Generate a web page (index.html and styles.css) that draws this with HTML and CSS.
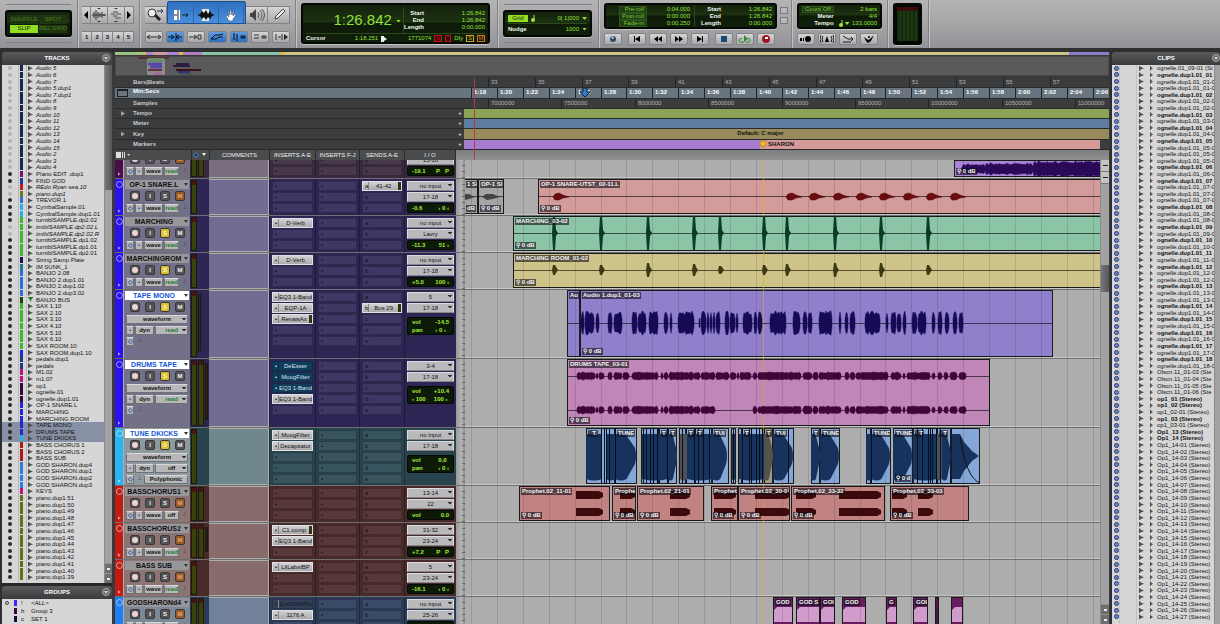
FILE: index.html
```html
<!DOCTYPE html>
<html lang="en">
<head>
  <meta charset="UTF-8" />
  <meta name="viewport" content="width=device-width, initial-scale=1.0"/>
  <title>Edit: Session</title>
  <link rel="stylesheet" href="styles.css">
</head>
<body>
  <!-- Toolbar -->
  <header class="toolbar">
    <section class="module modes">
      <div class="lcd mode-lcd">
        <button>SHUFFLE</button><button>SPOT</button>
        <button class="on">SLIP</button><button>REL GRID</button>
      </div>
    </section>

    <section class="module zooms">
      <div class="row big">
        <button class="slim" aria-label="Zoom out"><svg width="4" height="8" viewBox="0 0 4 8"><path d="M4 0v8L0 4z"/></svg></button>
        <button aria-label="Audio zoom"><svg width="14" height="14" viewBox="0 0 14 14"><path d="M0 7h14M2 4v6M4 2v10M6 4v6M8 5v4M10 4v6M12 6v2" stroke="#333" fill="none"/><path d="M5 1l2-1 2 1zM5 13l2 1 2-1z"/></svg></button>
        <button aria-label="MIDI zoom"><svg width="14" height="14" viewBox="0 0 14 14"><path d="M4 4h5M2 6h4M7 6h5M4 8h4M6 10h6" stroke="#777" stroke-width="1.5" fill="none"/><path d="M5 1l2-1 2 1zM5 13l2 1 2-1z"/></svg></button>
        <button class="slim" aria-label="Zoom in"><svg width="4" height="8" viewBox="0 0 4 8"><path d="M0 0v8l4-4z"/></svg></button>
      </div>
      <div class="row small">
        <button>1</button><button>2</button><button>3</button><button>4</button><button>5</button>
      </div>
    </section>

    <section class="module tools">
      <div class="row big">
        <button aria-label="Zoomer"><svg width="18" height="15" viewBox="0 0 18 15"><circle cx="5" cy="5" r="4" fill="#eee" stroke="#333"/><path d="M8 7l5 5" stroke="#222" stroke-width="3"/><path d="M10 3h6M14 1l2 2-2 2" stroke="#333" fill="none"/></svg></button>
        <div class="smart">
          <button aria-label="Trim"><svg width="16" height="14" viewBox="0 0 16 14"><path d="M1 2h6v10H1z" fill="#fff"/><path d="M1 7h3M5 2v10" stroke="#222"/><path d="M9 7h6M13 5l2 2-2 2" stroke="#123" fill="none"/></svg></button>
          <button aria-label="Selector"><svg width="18" height="14" viewBox="0 0 18 14"><path d="M5 1h7v12H5z" fill="#e8e8e8"/><path d="M0 7l3-1 2-3 2 2 2-3 2 4 2-3 2 3 3 1-3 1-2 3-2-2-2 3-2-3-2 2-2-3z" fill="#111"/></svg></button>
          <button aria-label="Grabber"><svg width="14" height="14" viewBox="0 0 14 14"><path d="M5 13L2 8l1-1 2 2-1-6h1l1 4V2h1l1 5 1-4h1l-1 5 2-2 1 1-3 4v2z" fill="#fff" stroke="#345" stroke-width=".5"/></svg></button>
        </div>
        <button aria-label="Scrubber"><svg width="16" height="14" viewBox="0 0 16 14"><path d="M1 5h2l4-4v12L3 9H1z" fill="#444"/><path d="M9 4q2 3 0 6M11 2q4 5 0 10M13 1q5 6 0 12" stroke="#555" fill="none"/></svg></button>
        <button aria-label="Pencil"><svg width="14" height="14" viewBox="0 0 14 14"><path d="M3 11l1-3 7-7 2 2-7 7z" fill="#eee" stroke="#444"/></svg></button>
      </div>
      <div class="row small">
        <button aria-label="Zoom toggle"><svg width="14" height="6"><path d="M0 3h14M3 1L0 3l3 2M11 1l3 2-3 2" stroke="#333" fill="none"/></svg></button>
        <button class="blue" aria-label="Tab to transients"><svg width="14" height="8"><path d="M0 4h6M3 2l3 2-3 2M8 0v8M8 4h6M11 2L8 4l3 2" stroke="#012" fill="none"/></svg></button>
        <button aria-label="Mirrored MIDI"><svg width="14" height="8"><path d="M0 4h7M5 2l3 2-3 2M9 2h3v4H9z" stroke="#333" fill="none"/></svg></button>
        <button class="blue" aria-label="Automation follows edit"><svg width="14" height="8"><path d="M1 6l4-4h4l4-1M1 6h5l3-2h4" stroke="#012" fill="none"/></svg></button>
        <button class="blue" aria-label="Link timeline"><svg width="14" height="8"><path d="M2 0v7M5 1v7M8 4h6M10 2v4M12 2v4" stroke="#012" fill="none"/></svg></button>
        <button aria-label="Link track"><svg width="14" height="8"><path d="M1 2h5M1 5h5M8 4h6M10 2v4M12 2v4" stroke="#333" fill="none"/></svg></button>
        <button aria-label="Insertion follows"><svg width="14" height="8"><path d="M2 1v6M4 4h3M8 1v6" stroke="#333"/><path d="M10 1v6l4-3z" fill="#222"/></svg></button>
      </div>
    </section>

    <section class="module counter">
      <div class="lcd main-lcd">
        <div class="main-top">
          <button class="big-time">1:26.842 <span class="caret"></span></button>
          <dl class="pairs">
            <dt>Start</dt><dd>1:26.842</dd>
            <dt>End</dt><dd>1:26.842</dd>
            <dt>Length</dt><dd>0:00.000</dd>
          </dl>
        </div>
        <div class="main-bottom">
          <b>Cursor</b><span class="push">1:18.251</span>
          <svg width="6" height="6"><path d="M0 0h3v1l3 2-3 2v1H0z" fill="#eee"/></svg>
          <span class="push">1771074</span>
          <i class="chip red">x</i><i class="chip red slant"></i><span>Dly</span><i class="chip gold">S</i><i class="chip orange">M</i>
        </div>
      </div>
    </section>

    <section class="module gridval">
      <div class="lcd grid-lcd">
        <div class="line"><button class="on">Grid</button><svg width="4" height="7"><path d="M3 0v5" stroke="#9ee23c"/><circle cx="2" cy="5" r="2" fill="#9ee23c"/></svg><span class="push">0| 1|000</span><span class="caret"></span></div>
        <div class="line"><b>Nudge</b><span class="push">1000</span><span class="caret"></span></div>
      </div>
    </section>

    <section class="module transport">
      <div class="stack">
        <div class="lcd trans-lcd">
          <dl class="pairs rolls"><dt>Pre-roll</dt><dd>0:04.000</dd><dt>Post-roll</dt><dd>0:00.000</dd><dt>Fade-in</dt><dd>0:00.250</dd></dl>
          <dl class="pairs"><dt>Start</dt><dd>1:26.842</dd><dt>End</dt><dd>1:26.842</dd><dt>Length</dt><dd>0:00.000</dd></dl>
        </div>
        <div class="row keys">
          <button class="apart" aria-label="Online"><svg width="8" height="8"><circle cx="4" cy="4" r="3" fill="#2a4a66"/><path d="M4 4L2 2M4 4V1" stroke="#cde"/></svg></button>
          <button aria-label="Return to zero"><svg width="6" height="6"><path d="M0 0h1v6H0zM6 0v6L1 3z"/></svg></button>
          <button aria-label="Rewind"><svg width="8" height="6"><path d="M4 0v6L0 3zM8 0v6L4 3z"/></svg></button>
          <button aria-label="Fast forward"><svg width="8" height="6"><path d="M0 0v6l4-3zM4 0v6l4-3z"/></svg></button>
          <button class="apart" aria-label="Go to end"><svg width="6" height="6"><path d="M5 0h1v6H5zM0 0v6l5-3z"/></svg></button>
          <button aria-label="Stop"><svg width="6" height="6"><path d="M0 0h6v6H0z" fill="#174a78"/></svg></button>
          <button aria-label="Play"><svg width="14" height="9"><path d="M4 3Q0 4 1 6q2 2 5 1M10 3q3 1 2 3-2 2-4 1" stroke="#2e8a2e" fill="none"/><path d="M6 0v7l4-3z" fill="#2e8a2e"/></svg></button>
          <button aria-label="Record"><svg width="8" height="8"><circle cx="4" cy="4" r="4" fill="#a3131d"/><path d="M3 2h3v2H3z" fill="#fff"/></svg></button>
        </div>
      </div>
      <div class="squares"><button aria-label="Pre"></button><button aria-label="Post"></button></div>
    </section>

    <section class="module midi">
      <div class="stack">
        <div class="lcd midi-lcd">
          <dl class="pairs"><dt class="boxed">Count Off</dt><dd>2 bars</dd><dt>Meter</dt><dd>4/4</dd><dt>Tempo</dt><dd class="tempo-val"><svg width="4" height="7"><path d="M3 0v5" stroke="#9ee23c"/><circle cx="2" cy="5" r="2" fill="#9ee23c"/></svg><span class="caret"></span><span class="push">133.0000</span></dd></dl>
        </div>
        <div class="row keys">
          <button aria-label="Wait for note"><svg width="12" height="8"><path d="M0 3h2v3H0zM3 3h1v3H3z"/><circle cx="8" cy="4" r="3"/></svg></button>
          <button aria-label="Metronome"><svg width="14" height="8"><path d="M5 7l2-6 2 6z"/><path d="M3 1Q1 4 3 7M1 0Q-1 4 1 8M11 1q2 3 0 6M13 0q2 4 0 8" stroke="#222" fill="none"/></svg></button>
          <button aria-label="MIDI merge"><svg width="12" height="8"><path d="M1 1l5 3M1 7h8M6 4h5M9 2l2 2-2 2" stroke="#222" fill="none"/></svg></button>
          <button aria-label="Conductor"><svg width="12" height="8"><path d="M1 2l4 3 2-1 4-4-3 6-3 2-2-2z"/><circle cx="6" cy="2" r="1"/></svg></button>
        </div>
      </div>
    </section>

    <section class="module out"><div class="lcd out-meter"></div></section>
  </header>

  <main class="workspace">
    <!-- Left sidebar -->
    <aside class="side left">
      <h2>TRACKS<button class="knob" aria-label="Tracks menu"></button></h2>
      <div class="list-wrap">
        <ul class="track-list" id="trackList"></ul>
        <div class="vbar"><i class="thumb"></i><i class="arrow up"></i><i class="arrow"></i></div>
      </div>
      <h2>GROUPS<button class="knob" aria-label="Groups menu"></button></h2>
      <ul class="group-list">
        <li><i class="ring"></i><i class="chipbar" style="background:#4424ee"></i><span>!</span><em>&lt;ALL&gt;</em></li>
        <li><i></i><i class="chipbar" style="background:#310b33"></i><span>h</span>Group 3</li>
        <li><i></i><i class="chipbar" style="background:#1b0c3c"></i><span>c</span>SET 1</li>
      </ul>
    </aside>

    <!-- Edit area -->
    <section class="edit">
      <div class="memory"></div>
      <svg class="universe" height="20">
        <rect x="31" y="0" width="18" height="20" fill="#8b8b8b"/>
        <path d="M22 1h31" stroke="#5c2c34" stroke-width="2"/>
        <path d="M32 3h16" stroke="#6b8d6a" stroke-width="4"/>
        <path d="M32 7h14M34 10h12" stroke="#5a4aa8" stroke-width="3"/>
        <path d="M32 13h14" stroke="#6c2e44" stroke-width="2"/>
        <path d="M38 17h8" stroke="#b05ca8" stroke-width="2"/>
        <path d="M57 9h17M60 7h13" stroke="#2c1c3e" stroke-width="2"/>
        <path d="M60 13h25" stroke="#3c1416" stroke-width="2"/>
        <path d="M62 15h12" stroke="#3a2b7a" stroke-width="2"/>
        <path d="M64 17h12" stroke="#285a52"/>
      </svg>

      <div class="rulers">
        <div class="ruler"><span class="rname">Bars|Beats</span><div class="scale" id="bars"></div></div>
        <div class="ruler active"><span class="rname">Min:Secs</span><div class="scale" id="mins"></div></div>
        <div class="ruler"><span class="rname">Samples</span><div class="scale" id="samples"></div></div>
        <div class="ruler"><span class="rname tri">Tempo</span><button>+</button><div class="scale tempo"></div></div>
        <div class="ruler"><span class="rname">Meter</span><button>+</button><div class="scale meter"></div></div>
        <div class="ruler"><span class="rname tri">Key</span><button>+</button><div class="scale key"><b>Default: C major</b></div></div>
        <div class="ruler"><span class="rname">Markers</span><button>+</button><div class="scale markers"><div class="part-a"></div><div class="part-b"><svg width="6" height="8"><path d="M0 1h6v4L3 7 0 5z" fill="#f5b81f" stroke="#7a5a10" stroke-width=".5"/></svg><b>SHARON</b></div></div></div>
        <i class="redline"></i>
        <svg class="playmark" width="12" height="10"><path d="M4 0h4v4h3L6 9 1 4h3z" fill="#2f7fd6" stroke="#123"/></svg>
      </div>

      <div class="heads">
        <span class="h-track"><svg width="14" height="6"><path d="M0 0h5v6H0zM6 0h1v6H6zM8 0h1v6H8z" fill="#ddd"/><path d="M11 2h3l-1 2z" fill="#ddd"/></svg></span>
        <span class="h-meter"><svg width="14" height="6"><circle cx="3" cy="3" r="2" fill="#1d2f4c" stroke="#4a86c8"/><path d="M9 1h4l-2 3z" fill="#eee"/></svg></span>
        <span class="h-com">COMMENTS</span><span class="h-ins">INSERTS A-E</span><span class="h-ins2">INSERTS F-J</span><span class="h-snd">SENDS A-E</span><span class="h-io">I / O</span>
        <div class="h-time"></div>
      </div>

      <div class="arrange">
        <div class="tracks" id="tracks">
          <div class="grid-lines" id="gridLines"></div>
        </div>
        <div class="vbar"><i class="tool"></i><i class="tool"></i><i class="thumb"></i><i class="arrow up"></i><i class="arrow"></i></div>
      </div>
    </section>

    <!-- Clip list -->
    <aside class="side right">
      <h2>CLIPS<button class="knob" aria-label="Clips menu"></button></h2>
      <div class="list-wrap">
        <ul class="clip-list" id="clipList"></ul>
        <div class="vbar"></div>
      </div>
    </aside>
  </main>
  <script src="script.js"></script>
</body>
</html>
```

FILE: styles.css
```css
* {
  box-sizing: border-box;
}

body {
  margin: 0;
  height: 100vh;
  display: flex;
  flex-direction: column;
  overflow: hidden;
  background: #2c2e31;
  font: 6px/7px "Liberation Sans", Arial, sans-serif;
  color: #111;
}

button, select {
  font: inherit;
  color: inherit;
  border: 0;
  margin: 0;
  padding: 0;
  background: none;
  appearance: none;
}

ul, dl, dd, h2 {
  margin: 0;
  padding: 0;
  list-style: none;
}

i {
  font-style: normal;
}

svg {
  display: block;
  flex: none;
}

.push {
  margin-left: auto;
}

.caret {
  display: inline-block;
  width: 5px;
  height: 3px;
  background: currentColor;
  clip-path: polygon(0 0, 100% 0, 50% 100%);
}

/* Toolbar */
.toolbar {
  flex: 0 0 48px;
  display: flex;
  background: linear-gradient(#b4b4b7, #a2a2a5 60%, #919295);
}

.module {
  flex: none;
  padding: 6px 5px 0;
  border-right: 1px solid #818284;
  box-shadow: 1px 0 0 #c2c2c4;
  display: flex;
  flex-direction: column;
  gap: 7px;
}

.modes, .gridval {
  background: linear-gradient(transparent 4px, #808184 4px 5px, transparent 5px 42px, #808184 42px 43px, transparent 43px) center / calc(100% - 12px) 100% no-repeat;
}

.modes {
  width: 78px;
  padding-top: 10px;
}

.zooms {
  width: 62px;
  padding-left: 4px;
}

.tools {
  width: 156px;
}

.counter {
  width: 202px;
  padding-top: 3px;
}

.gridval {
  width: 101px;
  padding-top: 10px;
}

.transport {
  width: 193px;
  padding-top: 3px;
  flex-direction: row;
  gap: 3px;
}

.midi {
  width: 96px;
  padding-top: 3px;
}

.out {
  width: 41px;
  padding-top: 3px;
}

.lcd {
  background: linear-gradient(#14210c, #1d3312 45%, #0d1a08 50%, #101f0b);
  border: 2px solid #050805;
  border-radius: 3px;
  box-shadow: 0 1px 0 #c4c4c6;
  color: #93e03a;
}

.lcd b, .lcd dt {
  color: #f2f5ee;
  font-weight: bold;
}

.mode-lcd {
  height: 27px;
  width: 67px;
  padding: 3px 3px 2px;
  display: grid;
  grid-template-columns: 1fr 1fr;
  grid-auto-rows: 1fr;
  gap: 1px;
}

.mode-lcd button {
  background: #1d3510;
  color: #4e7f22;
  white-space: nowrap;
}

.mode-lcd .on, .grid-lcd .on {
  background: #93dd22;
  color: #14240a;
}

.row {
  display: flex;
}

.row button {
  display: flex;
  align-items: center;
  justify-content: center;
}

.row.big {
  height: 18px;
}

.row.big > button, .row.small button, .keys button {
  background: linear-gradient(#d6d6d8, #a9a9ab);
  border: 1px solid #828385;
  border-left-width: 0;
}

.zooms .big button {
  flex: 1;
}

.zooms .big .slim {
  flex: 0 0 9px;
}

.row.small {
  height: 12px;
}

.zooms .small button {
  flex: 1;
  font-weight: bold;
}

.tools .big > button {
  flex: 1;
}

.smart {
  display: flex;
  height: 23px;
  margin-top: -5px;
  padding: 4px 1px 0;
  background: linear-gradient(#2e6fc0, #4b8fdc);
  border: 1px solid #1d4f92;
  border-radius: 2px 2px 0 0;
}

.smart button {
  width: 25px;
  border-right: 1px solid #2b65ad;
}

.tools .small, .keys {
  gap: 3px;
}

.tools .small button {
  flex: 1;
  border-left-width: 1px;
  border-radius: 2px;
}

.tools .small .blue {
  background: linear-gradient(#5f9de2, #2e6fbe);
}

.main-lcd {
  height: 41px;
  width: 189px;
  padding: 2px 3px;
}

.main-top {
  display: flex;
  height: 27px;
  border-bottom: 1px solid #2c4a1c;
}

.big-time {
  flex: 1;
  font-size: 15px;
  line-height: 24px;
  text-align: right;
  padding-right: 2px;
  border-right: 1px solid #2c4a1c;
}

.big-time .caret {
  vertical-align: middle;
}

.pairs {
  display: grid;
  grid-template-columns: auto 1fr;
  column-gap: 3px;
  align-content: center;
  line-height: 7px;
}

.pairs dt, .pairs dd {
  text-align: right;
}

.main-top .pairs {
  width: 81px;
}

.main-bottom {
  display: flex;
  align-items: center;
  gap: 3px;
  height: 9px;
}

.main-bottom b {
  width: 28px;
}

.chip {
  width: 8px;
  height: 7px;
  border: 1px solid currentColor;
  text-align: center;
  line-height: 5px;
}

.chip.red {
  color: #c31616;
  background: #4a0b0b;
}

.chip.slant {
  width: 6px;
}

.chip.gold {
  color: #c7a52a;
}

.chip.orange {
  color: #da7420;
}

.grid-lcd {
  height: 27px;
  width: 89px;
  padding: 2px 3px;
}

.line {
  display: flex;
  align-items: center;
  gap: 3px;
  height: 10px;
}

.line:first-child {
  border-bottom: 1px solid #2c4a1c;
}

.grid-lcd .on {
  width: 20px;
}

.stack {
  display: flex;
  flex-direction: column;
  gap: 4px;
}

.trans-lcd {
  width: 173px;
  height: 26px;
  display: flex;
  padding: 0 3px;
}

.trans-lcd .pairs {
  flex: 1;
  padding-left: 6px;
}

.trans-lcd .rolls {
  padding: 0 4px 0 10px;
  margin: 0;
  border-right: 1px solid #2c4a1c;
}

.rolls dt, .pairs .boxed {
  color: #7fc432;
  font-weight: normal;
  background: #1f3d14;
  box-shadow: inset 0 0 0 1px #2d551b;
  padding: 0 3px;
}

.tempo-val {
  display: flex;
  align-items: center;
  gap: 2px;
  padding-left: 2px;
}

.keys button {
  width: 18px;
  height: 12px;
  border-left-width: 1px;
  border-radius: 2px;
}

.keys .apart {
  margin-right: 3px;
}

.squares {
  display: flex;
  flex-direction: column;
  gap: 3px;
  padding-top: 4px;
}

.squares button {
  width: 8px;
  height: 7px;
  background: #b9b9bb;
  border: 1px solid #77787a;
}

.midi-lcd {
  width: 85px;
  height: 26px;
  padding: 1px 3px;
}

.out-meter {
  width: 29px;
  height: 42px;
  background: linear-gradient(#3a0d0b 0 4px, transparent 4px), repeating-linear-gradient(90deg, #132b0c 0 2px, #1c3a12 2px 4px);
  border-width: 4px;
}

/* Workspace */
.workspace {
  flex: 1;
  min-height: 0;
  display: flex;
  padding-top: 4px;
  background: #2e2f31;
}

.side {
  display: flex;
  flex-direction: column;
  min-height: 0;
  min-width: 0;
  background: #262729;
}

.left {
  flex: 0 0 110px;
  margin-left: 2px;
}

.right {
  flex: 0 0 108px;
  margin-left: 2px;
}

.side h2 {
  flex: none;
  position: relative;
  height: 13px;
  font-size: 6px;
  line-height: 13px;
  text-align: center;
  color: #fff;
  background: linear-gradient(#5b5b5d, #3a3b3d);
  border-radius: 3px 3px 0 0;
}

.knob {
  position: absolute;
  right: 2px;
  top: 2px;
  width: 8px;
  height: 8px;
  border-radius: 50%;
  border: 1px solid #a9a9a9;
  background: #666;
}

.knob::after {
  content: "";
  position: absolute;
  left: 1px;
  top: 2px;
  width: 4px;
  height: 3px;
  background: #d0d0d0;
  clip-path: polygon(0 0, 100% 0, 50% 100%);
}

.right .knob {
  right: 0;
}

.list-wrap {
  flex: 1;
  min-height: 0;
  min-width: 0;
  display: flex;
}

.track-list, .clip-list {
  flex: 1;
  min-width: 0;
  display: flex;
  flex-direction: column;
  padding-bottom: 2px;
  white-space: nowrap;
  overflow: hidden;
}

.track-list {
  background: linear-gradient(90deg, #d6d6d6 16px, #b9b9b9 16px 17px, #d6d6d6 17px 24px, #b9b9b9 24px 25px, #d6d6d6 25px);
}

.track-list li, .clip-list li {
  flex: 1 1 0;
  min-height: 0;
  display: flex;
  align-items: center;
  line-height: 6px;
}

.dot {
  flex: none;
  width: 4px;
  height: 4px;
  margin: 0 8px 0 6px;
  border-radius: 50%;
  background: #2c2c2c;
}

.off .dot {
  background: #b3b3b3;
}

.off .tname {
  font-style: italic;
}

.chipbar {
  flex: none;
  width: 3px;
  height: 6px;
}

.wedge {
  flex: none;
  width: 5px;
  height: 5px;
  margin: 0 3px 0 5px;
  background: #4c4c4c;
  clip-path: polygon(0 0, 25% 0, 25% 20%, 100% 50%, 25% 80%, 25% 100%, 0 100%);
}

.wedge.down {
  background: #1c7a2c;
  transform: rotate(90deg);
}

.track-list .sel {
  background: #8790a5;
}

.vbar {
  flex: 0 0 8px;
  display: flex;
  flex-direction: column;
  background: #a2a2a2;
  border-left: 1px solid #8a8a8a;
}

.vbar .thumb {
  background: linear-gradient(90deg, #777, #575757);
  margin-bottom: auto;
}

.left .vbar .thumb {
  height: 125px;
}

.vbar .arrow {
  flex: 0 0 10px;
  padding: 3px 1px;
  background: #efefef content-box;
  background: linear-gradient(#eee, #eee) center / 3px 2px no-repeat, #6e6e6e;
  border-top: 1px solid #8f8f8f;
}

.left h2:nth-of-type(2) {
  margin-top: 3px;
}

.group-list {
  flex: 0 0 25px;
  background: #d6d6d6;
}

.group-list li {
  display: flex;
  align-items: center;
  height: 8px;
}

.group-list li > i:first-child {
  width: 4px;
  margin: 0 5px 0 3px;
}

.ring {
  height: 4px;
  border: 1px solid #444;
  border-radius: 50%;
}

.group-list span {
  width: 10px;
  margin-left: 4px;
}

.clip-list {
  background: linear-gradient(90deg, #d6d6d6 7px, #c2c2c2 7px 8px, #d6d6d6 8px 24px, #c2c2c2 24px 25px, #d6d6d6 25px);
  padding-bottom: 4px;
}

.clip-list .pin {
  flex: none;
  width: 5px;
  height: 5px;
  margin: 0 20px 0 2px;
  border-radius: 50%;
  background: #6b86d8;
  border: 1px solid #2a3668;
}

.clip-list .wedge {
  margin: 0 5px 0 0;
}

.clip-list .wedge + .wedge {
  width: 3px;
  margin: 0 4px 0 1px;
}

.right .vbar {
  flex-basis: 6px;
}

/* Edit area */
.edit {
  flex: 1;
  min-width: 0;
  display: flex;
  flex-direction: column;
  padding: 0 1px 0 3px;
  background: #38393a;
}

.memory {
  flex: 0 0 3px;
  background: linear-gradient(90deg, #9cc583 28px, #e0b93c 28px 31px, #a985d6 31px 38px, #d19a98 38px 52px, #a985d6 52px 64px, #e0b93c 64px 68px, #b37bc0 68px 86px, #8bc4a5 88px 165px, #e0b93c 165px 169px, #cdc38a 169px 954px, #8d7dc8 954px);
}

.universe {
  width: 100%;
  margin: 1px 0 2px;
  background: #5a5a5a;
  border: 1px solid #484848;
}

.rulers {
  position: relative;
  flex: 0 0 72px;
  display: grid;
  grid-template-rows: repeat(7, minmax(0, 1fr));
}

.ruler {
  display: flex;
  align-items: center;
  color: #c9c9c9;
  background: #3b3c3d;
  border-bottom: 1px solid #292a2b;
}

.ruler.active {
  background: #68757f;
  color: #fff;
}

.rname {
  flex: 0 0 341px;
  padding-left: 18px;
  font-weight: bold;
}

.rname.tri::before {
  content: "";
  float: left;
  width: 4px;
  height: 5px;
  margin: 1px 0 0 -12px;
  background: #a0a0a0;
  clip-path: polygon(0 0, 100% 50%, 0 100%);
}

.active .rname::before {
  content: "";
  float: left;
  width: 9px;
  height: 5px;
  margin: 1px 0 0 -16px;
  border: 1px solid #1c2024;
  border-top-width: 2px;
}

.ruler button {
  width: 8px;
  color: #ddd;
  font-weight: bold;
}

.scale {
  flex: 1;
  align-self: stretch;
  position: relative;
  overflow: hidden;
  min-width: 0;
}

.scale .tick {
  position: absolute;
  top: 0;
  bottom: 0;
  padding-left: 2px;
  line-height: 9px;
  border-left: 1px solid #222;
}

#mins .tick {
  font-weight: bold;
}

#bars .tick, #samples .tick {
  color: #b4b4b4;
}

.tempo {
  background: #8aa355;
}

.meter {
  background: #5e7c9e;
}

.key {
  background: #978b5b;
  text-align: center;
  line-height: 9px;
  color: #111;
  padding-right: 52px;
}

.markers {
  display: flex;
  color: #111;
}

.part-a {
  flex: 0 0 296px;
  background: #a67ccf;
}

.part-b {
  flex: 1;
  display: flex;
  align-items: center;
  gap: 2px;
  background: #d59a97;
  margin-right: 9px;
}

.redline {
  position: absolute;
  left: 359px;
  top: 0;
  height: 82px;
  width: 1px;
  background: #b33a44;
  z-index: 3;
}

.playmark {
  position: absolute;
  left: 464px;
  top: 10px;
}

.heads {
  flex: 0 0 10px;
  display: flex;
  color: #f0f0f0;
  line-height: 10px;
  text-align: center;
  background: #4a4b4d;
}

.heads span {
  flex: none;
  border-right: 1px solid #2b2c2d;
  white-space: nowrap;
}

.h-track, .h-meter {
  padding: 2px 0 0 1px;
}

.h-track {
  width: 77px;
}

.h-meter {
  width: 18px;
}

.h-com {
  width: 60px;
}

.h-ins {
  width: 46px;
}

.h-ins2 {
  width: 44px;
}

.h-snd {
  width: 45px;
}

.h-io {
  width: 51px;
}

.h-time {
  flex: 1;
  background: linear-gradient(#7c7e7f, #8f9192);
}

.arrange {
  flex: 1;
  min-height: 0;
  display: flex;
}

.arrange .vbar {
  flex-basis: 9px;
}

.arrange .tool {
  flex: 0 0 12px;
  background: linear-gradient(#222, #222) center / 5px 1px no-repeat, #c4c4c4;
  border-bottom: 1px solid #777;
}

.arrange .thumb {
  flex: 0 0 27px;
  margin-top: 81px;
}

.tracks {
  flex: 1;
  min-width: 0;
  position: relative;
  overflow: hidden;
  background: #adadad;
}

.grid-lines {
  position: absolute;
  left: 349px;
  right: 0;
  top: 0;
  bottom: 0;
  z-index: 1;
  overflow: hidden;
  pointer-events: none;
}

.grid-lines i {
  position: absolute;
  top: 0;
  bottom: 0;
  width: 1px;
  background: rgba(0, 0, 0, .12);
}

.grid-lines .cue {
  background: rgba(226, 170, 30, .6);
}

/* One track row */
.track {
  display: flex;
  height: 37px;
  overflow: hidden;
  border-bottom: 1px solid #222;
}

.track.large {
  height: 69px;
}

.track.medium {
  height: 58px;
}

.track.cut {
  height: 19px;
  align-items: flex-end;
}

.track.cut > * {
  height: 36px;
  flex-shrink: 0;
}

.track.cut > .lane {
  height: 18px;
}

.purple {
  --strip: #2a12ee;
  --panel: #73708a;
  --note: #736c92;
  --bg: #2d2654;
  --slot: #3f3865;
}

.dark {
  --strip: #4c0c4c;
  --panel: #746e7c;
  --note: #7a6f80;
  --bg: #382a40;
  --slot: #48384e;
}

.teal {
  --strip: #27b6f2;
  --panel: #8d999f;
  --note: #6f888e;
  --bg: #29434f;
  --slot: #37545f;
}

.red {
  --strip: #bf1d14;
  --panel: #8c7473;
  --note: #876c6b;
  --bg: #482a2b;
  --slot: #583839;
}

.blue2 {
  --strip: #1e7ef2;
  --panel: #7d8897;
  --note: #71819a;
  --bg: #293b59;
  --slot: #3a4b67;
}

.strip {
  flex: 0 0 8px;
  display: flex;
  flex-direction: column;
  justify-content: space-between;
  align-items: center;
  padding: 2px 0;
  background: var(--strip);
}

.strip::before {
  content: "";
  width: 5px;
  height: 5px;
  border: 1px solid rgba(255, 255, 255, .55);
  border-radius: 50%;
}

.strip::after {
  content: "";
  width: 3px;
  height: 4px;
  background: rgba(255, 255, 255, .6);
  clip-path: polygon(0 0, 100% 50%, 0 100%);
}

.ctl {
  flex: 0 0 66px;
  margin-left: 1px;
  padding: 1px 1px 0;
  background: var(--panel);
}

.ctl .name {
  display: flex;
  align-items: center;
  height: 9px;
  background: #97969b;
}

.ctl .name button {
  flex: 1;
  min-width: 0;
  font-size: 7px;
  line-height: 9px;
  font-weight: bold;
  text-align: center;
  white-space: nowrap;
}

.ctl .name .caret {
  color: #333;
  margin: 0 1px;
  width: 4px;
}

.picked .name {
  background: #fff;
}

.picked .name button {
  color: #1457d8;
}

.sq {
  display: flex;
  justify-content: space-between;
  padding: 2px 4px 0 5px;
  margin-bottom: 3px;
}

.sq button {
  width: 10px;
  height: 10px;
  border-radius: 2px;
  background: #545456;
  border: 1px solid #38383a;
  color: #f2f2f2;
  font-weight: bold;
  line-height: 8px;
  text-align: center;
}

.sq .rec::before {
  content: "";
  display: block;
  width: 6px;
  height: 6px;
  margin: 1px;
  border-radius: 50%;
  background: #ecd4d4;
}

.sq .solo-on {
  background: #d9bd33;
  color: #fff8cc;
}

.sq .muted {
  background: #9a5a28;
  color: #dca878;
}

.bar {
  display: flex;
  gap: 1px;
  height: 9px;
  margin-bottom: 2px;
  padding: 0 1px;
}

.bar button, .bar select {
  height: 9px;
  line-height: 7px;
  text-align: center;
  text-align-last: center;
  background-color: #b7b7ba;
  border: 1px solid #6f6f74;
  border-top-color: #d8d8da;
  border-radius: 1px;
  font-weight: bold;
}

.bar .ico {
  flex: 0 0 8px;
  color: #27509a;
}

.bar .w18 {
  flex: 0 0 19px;
}

.bar .w12 {
  flex: 0 0 15px;
}

.bar .grow {
  flex: 1;
  min-width: 0;
}

.bar .read {
  color: #1e7a2c;
}

.bar .foot {
  flex: 1;
  text-align: center;
  color: #444;
}

.bar .foot.short {
  flex: 0 0 8px;
}

.drop {
  background-image: linear-gradient(#333, #333), linear-gradient(#333, #333);
  background-size: 4px 1px, 2px 1px;
  background-position: right 1px top 2px, right 2px top 3px;
  background-repeat: no-repeat;
}

.meters {
  flex: 0 0 19px;
  display: flex;
  gap: 1px;
  padding: 1px 1px;
  background: var(--bg);
}

.meters i {
  width: 6px;
  background: linear-gradient(#4a1410 4px, #394208 4px);
  border: 1px solid #1a1a10;
}

.meters .gr {
  width: 3px;
  margin: 3px 0 6px;
  background: #3a2014;
}

.note {
  flex: 0 0 59px;
  margin: 1px 1px 1px 0;
  background: var(--note);
}

.slots {
  display: flex;
  flex-direction: column;
  gap: 1px;
  padding: 2px 2px 0;
  background: var(--bg);
  border-left: 1px solid rgba(0, 0, 0, .3);
}

.ins {
  flex: 0 0 46px;
}

.ins2 {
  flex: 0 0 44px;
}

.snd {
  flex: 0 0 45px;
}

.io {
  flex: 0 0 51px;
}

.slots button {
  flex: 0 0 10px;
  display: flex;
  align-items: center;
  background: var(--slot);
  border: 1px solid rgba(0, 0, 0, .25);
  color: rgba(0, 0, 0, .75);
  text-align: left;
  line-height: 8px;
  white-space: nowrap;
}

.slots button i {
  flex: 0 0 6px;
  padding-left: 2px;
}

.slots button span {
  flex: 1;
  text-align: center;
}

.slots .full {
  background: linear-gradient(#d2d2d4, #aaaaad);
  border-color: #e0e0e2;
  color: #111;
}

.slots .full i {
  border-right: 1px solid #85858a;
}

.slots .byp {
  background: #123c5c;
  border-color: #0e2f49;
  color: #d5e4f0;
}

.slots .byp i {
  border-color: #0e2f49;
}

.slots .inactive {
  background: #333f55;
  border-color: #27334a;
  color: #10182a;
  font-style: italic;
}

.slots button .lvl {
  flex: 0 0 3px;
  height: 8px;
  padding: 0;
  border: 0;
  background: #33330a;
}

.io select {
  flex: 0 0 10px;
  width: 47px;
  background-color: #b9b9bc;
  border: 1px solid #dcdcde;
  border-bottom-color: #86868a;
  text-align: center;
  text-align-last: center;
  line-height: 8px;
  color: #111;
}

.vol {
  display: grid;
  grid-template-columns: 1fr auto;
  align-content: center;
  height: 10px;
  padding: 0 4px;
  background: #0d1a08;
  border: 1px solid #050a03;
  border-radius: 2px;
  color: #a5ec3c;
  font-weight: bold;
  line-height: 8px;
  white-space: nowrap;
}

.vol.tall {
  height: 18px;
  margin-top: 3px;
}

.edge {
  flex: 0 0 9px;
  background: repeating-linear-gradient(transparent 0 5px, rgba(0, 0, 0, .35) 5px 6px) right / 3px 100% no-repeat, linear-gradient(90deg, #9a9a9a, #b4b4b4 60%, #8c8c8c);
}

.lane {
  flex: 1;
  min-width: 0;
  position: relative;
  overflow: hidden;
  background: #adadad;
  border-bottom: 1px solid #c6c6c6;
}

.track:has(.lane) {
  border-bottom-color: #6f6f6f;
}

.clip {
  position: absolute;
  top: 0;
  bottom: 0;
  overflow: hidden;
  background: var(--fill);
  border: 1px solid #1a1a1a;
}

.clip span {
  position: absolute;
  z-index: 2;
  left: 1px;
  padding: 0 1px;
  background: rgba(20, 15, 25, .62);
  color: #f4f4f4;
  font-weight: bold;
  white-space: nowrap;
}

.clip .cname {
  top: 1px;
}

.clip .gain {
  bottom: 1px;
}

.lane svg {
  position: absolute;
  left: 0;
  top: 0;
  z-index: 1;
}
```

FILE: script.js
```js
// ---------- Track list ----------
const trackList = [
  ['#14284a', 0, 'Audio 5|Audio 6|Audio 7|Audio 5.dup1|Audio 7.dup1|Audio 8|Audio 9|Audio 10|Audio 11|Audio 12|Audio 13|Audio 14|Audio 15|Audio 2|Audio 3|Audio 4'],
  ['#7a0c6a', 1, 'PIano EDIT .dup1'],
  ['#1c3a9c', 1, 'FIND GOD'],
  ['#c01a1a', 0, 'REdo Ryan sea.10'],
  ['#6c7a1c', 0, 'piano.dup1'],
  ['#2a6ee0', 1, 'TREVOR.1'],
  ['#2ab0e8', 1, 'CymbalSample.01|CymbalSample.dup1.01'],
  ['#3fb82c', 1, 'turntblSAMPLE.dp2.02'],
  ['#3fb82c', 0, 'imtblSAMPLE.dp2.02.L|imtblSAMPLE.dp2.02.R'],
  ['#3fb82c', 1, 'turntblSAMPLE.dp1.02|turntblSAMPLE.dp1.01|turntblSAMPLE.dp2.01'],
  ['#14184a', 1, 'String Samp Plate'],
  ['#1c7c84', 1, 'IM SUNK_1'],
  ['#2a6ee0', 1, 'BANJO 2.08|BANJO 2.dup1.01|BANJO 2.dup1.02|BANJO 2.dup3.02'],
  ['#24400e', 1, 'BANJO BUS'],
  ['#3fb82c', 1, 'SAX 1.10|SAX 2.10|SAX 3.10|SAX 4.10|SAX 5.10|SAX 6.10|SAX ROOM.10'],
  ['#2424d8', 1, 'SAX ROOM.dup1.10'],
  ['#1c3a7c', 1, 'pedals.dup1|pedals'],
  ['#b8147c', 1, 'M1.02|m1.07'],
  ['#310b33', 1, 'op1|ognelle.01|ognelle.dup1.01'],
  ['#2424d8', 1, 'OP-1 SNARE.L|MARCHING|MARCHING ROOM|TAPE MONO|DRUMS TAPE'],
  ['#2ab0e8', 1, 'TUNE DKICKS'],
  ['#b01818', 1, 'BASS CHORUS 1|BASS CHORUS 2|BASS SUB'],
  ['#2a7ee0', 1, 'GOD SHARON.dup4|GOD SHARON.dup1|GOD SHARON.dup2|GOD SHARON.dup3'],
  ['#b8147c', 1, 'KEYS'],
  ['#5c7418', 1, Array.from({ length: 13 }, (_, i) => 'piano.dup1.' + (51 - i)).join('|')]
];
const selected = ['TAPE MONO', 'DRUMS TAPE', 'TUNE DKICKS'];

document.getElementById('trackList').innerHTML = trackList.map(([color, on, names]) =>
  names.split('|').map(n => `<li class="${on ? '' : 'off'} ${selected.includes(n) ? 'sel' : ''}">
    <i class="dot"></i><i class="chipbar" style="background:${color}"></i>
    <i class="wedge ${n === 'BANJO BUS' ? 'down' : ''}"></i><span class="tname">${n}</span></li>`).join('')
).join('');

// ---------- Clip list ----------
// number of partial takes listed under each whole file
const takes = [2, 2, 1, 1, 3, 1, 3, 2, 1, 1, 1, 2, 2, 1, 1, 1, 1, 2];
let clips = ['ognelle.01_09-01 (St'];
takes.forEach((count, i) => {
  const n = String(i + 1).padStart(2, '0');
  clips.push('*ognelle.dup1.01_' + n);
  for (let k = 0; k < count; k++) clips.push('ognelle.dup1.01_' + n + '-0');
});
clips = clips.slice(0, 46).concat(
  ['Olscn.11_01-03 (Ste', 'Olscn.11_01-04 (Ste', 'Olscn.11_01-05 (Ste', 'Olscn.11_01-06 (Ste',
    '*op1_01 (Stereo)', '*op1_02 (Stereo)', 'op1_02-01 (Stereo)', '*op1_03 (Stereo)', 'op1_03-01 (Stereo)',
    '*Op1_13 (Stereo)', '*Op1_14 (Stereo)'],
  Array.from({ length: 27 }, (_, i) => `Op1_14-${String(i + 1).padStart(2, '0')} (Stereo)`)
);
document.getElementById('clipList').innerHTML = clips.map(c =>
  `<li><i class="pin"></i><i class="wedge"></i><i class="wedge"></i>${c[0] === '*' ? `<b>${c.slice(1)}</b>` : `<span>${c}</span>`}</li>`
).join('');

// ---------- Rulers ----------
function ticks(id, start, step, labels) {
  document.getElementById(id).innerHTML = labels.map((l, i) =>
    `<span class="tick" style="left:${Math.round(start + step * i)}px">${l}</span>`).join('');
}
const off = 8; // scales without a + button start 8px earlier
const secs = Array.from({ length: 25 }, (_, i) => 78 + i * 2)
  .map(s => Math.floor(s / 60) + ':' + String(s % 60).padStart(2, '0'));
ticks('bars', 24 + off, 46.8, Array.from({ length: 13 }, (_, i) => 33 + i * 2));
ticks('mins', 7 + off, 25.9, secs);
ticks('samples', 24 + off, 73.4, Array.from({ length: 9 }, (_, i) => 7000000 + i * 500000));

document.getElementById('gridLines').innerHTML =
  secs.map((s, i) => `<i style="left:${Math.round(7 + 25.9 * i)}px"></i>`).join('') +
  '<i class="cue" style="left:299px"></i>';

// ---------- Waveforms ----------
function burst(segs, mid, amp, color) {
  let n = 7;
  const d = segs.map(([a, b]) => {
    const up = [], down = [];
    for (let x = a; x <= b; x += 1) {
      n = (n * 73 + 41) % 101;
      const edge = x === a || x + 1 > b;
      const h = edge ? amp * 0.35 : amp * (0.7 + n / 330);
      up.push(`${x} ${mid - h}`);
      down.unshift(`${x} ${mid + h}`);
    }
    return 'M' + up.concat(down).join('L') + 'z';
  }).join('');
  return `<path d="${d}" fill="${color}" stroke="${color}" stroke-width=".5"/>`;
}
const rule = (x1, x2, y) => `<path d="M${x1} ${y + .5}H${x2}" stroke="#000" stroke-opacity=".6"/>`;
const spikes = (xs, mid, amps, c) => xs.map((x, i) => {
  const a = amps[i % amps.length];
  return `<path d="M${x - 2} ${mid}L${x - 1} ${mid - a}H${x + 1}L${x + 2} ${mid - 3} ${x + 4} ${mid} ${x + 2} ${mid + 3} ${x + 1} ${mid + a}H${x - 1}z" fill="${c}"/>`;
}).join('');
const drop = (x, mid) => `<path d="M${x} ${mid}l2-3 4-1 4 2 6 2-6 1-4 2-4 0z" fill="#6b0d10" stroke="#400508" stroke-width=".5"/>`;
const bullet = (a, b, c) => {
  const w = b - a;
  return `<path d="M${a} 6H${a + w * .5}L${b - 1} 20Q${b + 1} 28 ${b - 1} 36L${a + w * .55} 51Q${a + w * .3} 54 ${a} 51z" fill="${c || '#17325c'}"/>`;
};
const block = (a, b, c) => `<path d="M${a} 6H${b}V51Q${(a + b) / 2} 54 ${a} 51z" fill="${c || '#17325c'}"/>`;
const bars = xs => xs.map(x => `<path d="M${x + .5} 0V56" stroke="#05101f"/>`).join('');

const hits = [89, 136, 183, 229, 255, 299, 322, 370, 416, 463];
const tape = [[116, 119], [120, 129], [131, 134], [143, 147], [149, 157], [167, 172], [173, 181], [184, 193], [199, 203], [205, 207],
  [213, 229], [234, 235], [236, 241], [242, 244], [245, 247], [248, 250], [251, 255], [260, 264], [265, 270], [271, 273], [278, 287],
  [289, 292], [293, 297], [305, 321], [328, 335], [338, 342], [343, 347], [354, 367], [374, 376], [380, 383], [385, 390], [400, 415],
  [421, 423], [426, 431], [432, 436], [438, 441], [447, 452], [453, 461], [467, 470], [473, 477], [480, 484], [488, 492], [494, 498]];
const drums = [[112, 130], [131, 133], [134, 139], [143, 147], [149, 157], [158, 164], [167, 193], [196, 198], [199, 203], [204, 229],
  [229, 235], [236, 250], [251, 264], [265, 271], [272, 274], [275, 286], [288, 292], [293, 336], [338, 347], [348, 353], [354, 376],
  [380, 384], [385, 390], [391, 423], [426, 436], [438, 440], [442, 465], [467, 470], [473, 477], [479, 483], [485, 492], [494, 501]];
const line2 = drums.filter(([a, b]) => b < 261 || a > 280);
const bass = [[111, 138], [155, 170], [205, 225], [249, 271], [290, 325], [331, 351], [374, 416], [427, 442], [453, 468]];
const god = [[308, 328], [331, 355], [355, 370], [377, 401], [421, 432], [448, 463], [470, 474], [486, 498]];

// ---------- Tracks ----------
// clips: [left, right, label, gain, fill]
const tracks = [
  { size: 'cut', theme: 'dark', name: '', mute: 1, meters: 2, io: ['no input', '15-16'], vol: ['-19.1', 'P &nbsp; P'],
    clips: [[489, 700, '', '&#9906; 0 dB', '#a985d6']],
    wave: burst([[497, 520]], 9, 5, '#2a0a58') + burst([[520, 568]], 9, 6, '#2a0a58') + burst([[568, 700]], 9, 8, '#2a0a58') },
  { theme: 'purple', name: 'OP-1 SNARE.L', mute: 1, meters: 1, sends: ['41-42'], io: ['no input', '17-18'], vol: ['-0.6', '&rsaquo; 0 &lsaquo;'],
    clips: [[-1, 13, '1 SI', 'dB', '#a5a5a5'], [13, 39, 'OP-1 SI', '&#9906; 0 dB', '#a5a5a5'], [73, 700, 'OP-1 SNARE-UTST_02-11.L', '&#9906; 0 dB', '#d39b99']],
    wave: rule(0, 39, 17) + rule(74, 700, 17) + '<path d="M0 15l4 0 6 3-6 2-4 1zM17 18l4-3 7 0 7 3-7 2-6 1z" fill="#444"/>' +
      [88, 321, 344, 368, 391, 414, 438, 461, 485].map(x => drop(x, 18)).join('') },
  { theme: 'purple', name: 'MARCHING', solo: 1, meters: 1, ins: ['D-Verb'], io: ['no input', 'Lavry'], vol: ['-11.3', '51 &rsaquo;'],
    clips: [[48, 700, 'MARCHING_03-02', '&#9906; 0 dB', '#8bc5a6']],
    wave: rule(49, 700, 17) + spikes(hits, 17, [17], '#0b3a26') },
  { theme: 'purple', name: 'MARCHINGROM', solo: 1, meters: 1, ins: ['D-Verb'], io: ['no input', '17-18'], vol: ['+5.0', '100 &rsaquo;'],
    clips: [[48, 700, 'MARCHING ROOM_01-02', '&#9906; 0 dB', '#cec48a']],
    wave: rule(49, 700, 17) + spikes(hits, 17, [5, 5, 7, 6, 4, 5, 6, 7, 7, 5], '#3b3a10') },
  { size: 'large', theme: 'purple', name: 'TAPE MONO', picked: 1, solo: 1, meters: 1, gr: 1, ins: ['EQ3 1-Band', 'EQP-1A', 'RenaisAx|'],
    sends: ['', 'Bus 29'], io: ['5', '17-18'], vol: ['vol', '-14.5', 'pan', '&rsaquo; 0 &lsaquo;'], mode: 'read',
    clips: [[102, 115, 'Au', '', '#9080cb'], [115, 588, 'Audio 1.dup1_01-03', '&#9906; 0 dB', '#9080cb']],
    wave: rule(103, 587, 33) + burst(tape, 33, 12, '#160a55') },
  { size: 'large', theme: 'purple', name: 'DRUMS TAPE', picked: 1, solo: 1, meters: 2, gr: 1, ins: ['!DeEsser', '!MoogFilter', '!EQ3 1-Band', 'EQ3 1-Band'],
    io: ['3-4', '17-18'], vol: ['vol', '+10.4', '&lsaquo; 100', '100 &rsaquo;'], mode: 'read',
    clips: [[102, 525, 'DRUMS TAPE_03-01', '&#9906; 0 dB', '#c086b8']],
    wave: rule(103, 524, 17) + rule(103, 524, 51) + burst(drums, 17, 4, '#3f0638') + burst(line2, 51, 4, '#3f0638') },
  { size: 'medium', theme: 'teal', name: 'TUNE DKICKS', picked: 1, solo: 1, meters: 1, ins: ['MoogFilter', 'Decapitator'],
    io: ['no input', '17-18'], vol: ['vol', '0.0', 'pan', '&rsaquo; 0 &lsaquo;'], mode: 'off', poly: 1,
    clips: [[121, 150, '&nbsp; T.'], [150, 172, 'TUNE'], [176, 194, ''], [194, 203, 'T'], [203, 212, 'T'], [214, 221, ''], [221, 230, 'T'], [230, 247, 'T'],
      [247, 264, 'TUI'], [266, 271, ''], [273, 277, ''], [277, 299, 'T'], [299, 308, 'T', '', '#a09c8c'], [308, 329, 'TUI'], [346, 355, 'T'], [355, 375, 'TUNE'],
      [401, 406, ''], [406, 426, 'TUNE'], [428, 448, 'TUNE', '&#9906; 0 d'], [448, 472, '&nbsp; T'], [472, 486, '&nbsp; T'], [486, 515, '']]
      .map(c => [c[0], c[1], c[2], c[3] || '', c[4] || '#85a7d8']),
    wave: block(121, 137) + block(141, 150) + bullet(150, 171) + block(177, 203) + bullet(203, 212) + block(215, 222, '#4e5058') + block(222, 247) +
      bullet(247, 262) + block(267, 270) + block(274, 299) + bullet(299, 308, '#55534c') + bullet(308, 328) + bullet(346, 355) + bullet(355, 374) +
      block(401, 406) + bullet(406, 425) + bullet(428, 447) + block(448, 472) + block(472, 477, '#4e5058') + bullet(477, 486) +
      '<path d="M487 6h8l4 8 8 9 7 5-7 5-8 10-4 8-8 0z" fill="#17325c"/><path d="M495 8q6 42 20 47" stroke="#111" fill="none"/>' +
      bars([136, 139, 141, 144, 150, 178, 181, 185, 188, 192, 202, 217, 229, 233, 238, 244, 268, 277, 284, 286, 291, 294, 297, 323, 406, 452, 457, 463, 465, 467, 471, 475]) },
  { theme: 'red', name: 'BASSCHORUS1', mute: 1, meters: 2, mode: 'off', io: ['13-14', '22'], vol: ['vol', '0.0'],
    clips: [[54, 145, 'Prophet.02_11-01'], [147, 171, 'Prophe'], [172, 239, 'Prophet.02_21-01'], [246, 273, 'Prophet'], [273, 325, 'Prophet.02_30-0'], [326, 420, 'Prophet.02_33-32'], [425, 504, 'Prophet.02_33-03']]
      .map(c => [...c, '&#9906; 0 dB', '#c18382']),
    wave: [9, 26].map(y => bass.map(([a, b]) => `<path d="M${a} ${y - 4}H${b - 4}L${b} ${y - 2}V${y + 2}L${b - 4} ${y + 4}H${a}z" fill="#3c0a0b"/>`).join('')).join('') },
  { theme: 'red', name: 'BASSCHORUS2', mute: 1, meters: 2, gr: 1, ins: ['C1 comp|', 'EQ3 1-Band'], io: ['31-32', '23-24'], vol: ['+7.2', 'P &nbsp; P'], clips: [], wave: '' },
  { theme: 'red', name: 'BASS SUB', mute: 1, meters: 1, ins: ['LilLabsIBP'], io: ['5', '23-24'], vol: ['-16.1', '&rsaquo; 0 &lsaquo;'], clips: [], wave: '' },
  { theme: 'blue2', name: 'GODSHARONd4', mute: 1, meters: 2, ins: ['~EndSMtrPlo', '1176 A'], io: ['no input', '25-26'], vol: ['0.0', '0'],
    clips: god.map(([a, b], i) => [a, b, ['GOD', 'GOD S', 'GOI', 'GOD', 'G', 'GOI', '', ''][i], '', i === 6 ? '#4f1050' : '#d09ccb']),
    wave: god.map(([a, b]) => `<path d="M${a + 1} 1H${b - 1}V10H${a + 4}L${a + 1} 13zM${a + 1} 25H${b - 1}V28H${a + 1}z" fill="#5c0f58" fill-opacity=".9"/>`).join('') }
];

function insert(text) {
  if (!text) return '<button aria-label="Empty insert"><i>&bull;</i></button>';
  const kind = { '!': 'byp', '~': 'inactive' }[text[0]] || '';
  const label = text.replace(/[!~|]/g, '');
  return `<button class="full ${kind}"><i>&bull;</i><span>${label}</span>${text.endsWith('|') ? '<i class="lvl"></i>' : ''}</button>`;
}

function send(text, letter) {
  return text
    ? `<button class="full"><i>${letter}</i><span>${text}</span><i class="lvl"></i></button>`
    : `<button><i>${letter}</i></button>`;
}

function controls(t) {
  const mode = t.mode || 'read';
  const read = mode === 'read' ? 'read' : '';
  if (!t.size || t.size === 'cut') {
    return `<div class="bar"><button class="ico">&#9671;</button><button class="ico">&#8226;</button>
      <button class="w18">wave</button><button class="w12 ${read}">${mode}</button><span class="foot">&#8869;</span></div>`;
  }
  return `<div class="bar"><select class="grow drop" aria-label="Track view"><option>waveform</option></select></div>
    <div class="bar"><button class="ico">&#8226;</button><button class="w18">dyn</button>
      <select class="grow drop ${read}" aria-label="Automation mode"><option>${mode}</option></select></div>
    <div class="bar"><button class="ico">&#9671;</button><span class="foot short">&#8869;</span>${t.poly ? '<button class="grow">Polyphonic</button>' : ''}</div>`;
}

function renderTrack(t) {
  const rows = t.size && t.size !== 'cut' ? 5 : 3;
  const n = [...Array(rows).keys()];
  return `<div class="track ${t.size || ''} ${t.theme} ${t.picked ? 'picked' : ''}">
    <div class="strip"></div>
    <div class="ctl">
      <div class="name">${t.name ? `<button>${t.name}</button><span class="caret"></span>` : ''}</div>
      <div class="sq"><button class="rec" aria-label="Record"></button><button>I</button>
        <button class="${t.solo ? 'solo-on' : ''}">S</button><button class="${t.mute ? 'muted' : ''}">M</button></div>
      ${controls(t)}
    </div>
    <div class="meters">${'<i></i>'.repeat(t.meters)}${t.gr ? '<i class="gr"></i>' : ''}</div>
    <div class="note"></div>
    <div class="slots ins">${n.map(i => insert((t.ins || [])[i])).join('')}</div>
    <div class="slots ins2">${n.map(() => insert('')).join('')}</div>
    <div class="slots snd">${n.map(i => send((t.sends || [])[i], 'abcde'[i])).join('')}</div>
    <div class="slots io">${t.io.map((v, i) => `<select class="drop" aria-label="${i ? 'Output' : 'Input'}"><option>${v}</option></select>`).join('')}
      <div class="vol ${rows === 5 ? 'tall' : ''}">${t.vol.map(v => `<span>${v}</span>`).join('')}</div></div>
    <div class="edge"></div>
    <div class="lane">
      ${t.clips.map(([a, b, label, gain, fill]) => `<div class="clip" style="left:${a}px;width:${b - a}px;--fill:${fill}">
        ${label ? `<span class="cname">${label}</span>` : ''}${gain ? `<span class="gain">${gain}</span>` : ''}</div>`).join('')}
      <svg width="700" height="68">${t.wave}</svg>
    </div>
  </div>`;
}

document.getElementById('tracks').insertAdjacentHTML('beforeend', tracks.map(renderTrack).join(''));
```
